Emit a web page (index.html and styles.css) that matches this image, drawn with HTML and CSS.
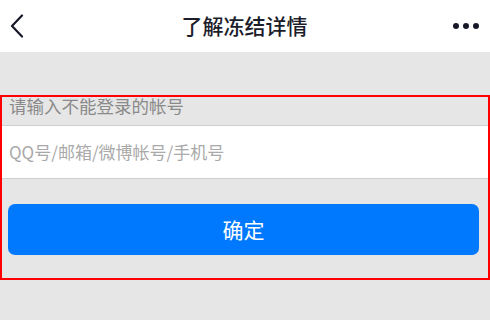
FILE: index.html
```html
<!DOCTYPE html>
<html lang="zh-CN">
<head>
<meta charset="utf-8">
<title>了解冻结详情</title>
<link rel="stylesheet" href="styles.css">
</head>
<body>
<header class="nav">
  <span class="nav-back">
    <svg width="14" height="24" viewBox="0 0 14 24"><path d="M12 1.5 L2 12 L12 22.5" fill="none" stroke="#16182a" stroke-width="2.2" stroke-linecap="round" stroke-linejoin="round"/></svg>
  </span>
  <h1 class="nav-title">了解冻结详情</h1>
  <span class="nav-more"><i></i><i></i><i></i></span>
</header>
<main class="content">
  <section class="form">
    <div class="form-label">请输入不能登录的帐号</div>
    <div class="form-field">
      <input class="form-input" type="text" placeholder="QQ号/邮箱/微博帐号/手机号">
    </div>
    <div class="form-actions">
      <button class="btn-primary" type="button">确定</button>
    </div>
  </section>
</main>
</body>
</html>
```
FILE: styles.css
```css
* { box-sizing: border-box; }
html, body {
  margin: 0;
  padding: 0;
  background: #e6e6e6;
  font-family: "Noto Sans CJK SC", "Noto Sans", sans-serif;
}
.nav {
  height: 52px;
  background: #ffffff;
  display: flex;
  align-items: center;
  justify-content: space-between;
  padding: 0 11px 0 10px;
}
.nav-back {
  width: 40px;
  display: flex;
  align-items: center;
}
.nav-back svg { display: block; }
.nav-title {
  margin: 0;
  font-size: 21px;
  font-weight: 500;
  color: #1c1d2a;
  line-height: 1;
  padding-bottom: 1px;
}
.nav-more {
  width: 40px;
  display: flex;
  justify-content: flex-end;
  gap: 4px;
}
.nav-more i {
  display: block;
  width: 6px;
  height: 6px;
  border-radius: 50%;
  background: #16182a;
}
.content {
  padding-top: 43px;
}
.form {
  border: 2.5px solid #ff0000;
  width: 490px;
  height: 185px;
}
.form-label {
  height: 29px;
  padding: 0 0 0 7px;
  font-size: 17.5px;
  line-height: 18px;
  color: #8a8a8a;
  border-bottom: 1px solid #cfcfcf;
}
.form-field {
  height: 53px;
  background: #ffffff;
  border-bottom: 1px solid #cfcfcf;
  display: flex;
  align-items: center;
}
.form-input {
  width: 100%;
  border: 0;
  outline: none;
  background: transparent;
  padding: 0 0 2px 7px;
  font-family: "Noto Sans CJK SC", "Noto Sans", sans-serif;
  font-size: 17px;
  color: #333;
}
.form-input::placeholder { color: #a9a9a9; }
.form-actions {
  padding: 25px 9px 0 6px;
}
.btn-primary {
  display: block;
  width: 100%;
  height: 51px;
  border: 0;
  border-radius: 7px;
  background: #0079fe;
  color: #ffffff;
  font-family: "Noto Sans CJK SC", "Noto Sans", sans-serif;
  font-size: 21px;
  font-weight: 400;
  padding: 0 0 2px;
}
```
